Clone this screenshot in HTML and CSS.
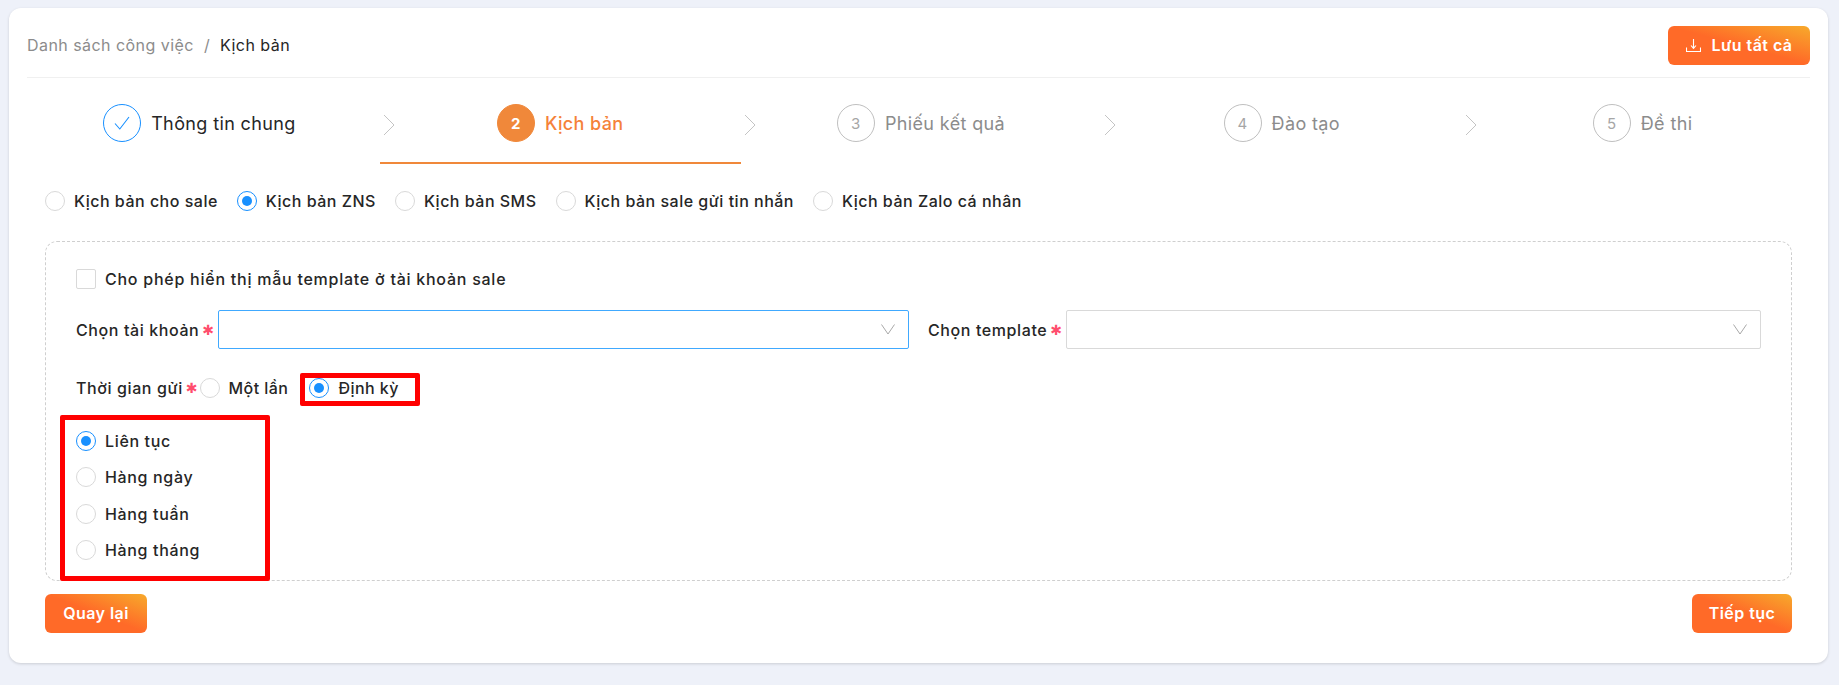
FILE: index.html
```html
<!DOCTYPE html>
<html lang="vi">
<head>
    <meta charset="UTF-8">
    <meta name="viewport" content="width=device-width, initial-scale=1.0">
    <title>Kịch bản</title>
    <link rel="stylesheet" href="styles.css">
</head>
<body>
    <div class="card">
        <div class="topbar">
            <div class="breadcrumb">
                <span class="crumb-link">Danh sách công việc</span>
                <span class="crumb-sep">/</span>
                <span class="crumb-current">Kịch bản</span>
            </div>
            <button type="button" class="btn btn-save">
                <svg class="icon-save" width="15" height="13" viewBox="0 0 15 13" fill="none" stroke="#fff" stroke-width="1.1">
                    <path d="M7.5 0v9M5 6.5l2.5 2.8L10 6.5M.5 8.5v4h14v-4"/>
                </svg>
                Lưu tất cả
            </button>
        </div>

        <div class="steps">
            <div class="step step-done">
                <span class="step-circle">
                    <svg width="16" height="14" viewBox="0 0 16 14" fill="none" stroke="#1890ff" stroke-width="1.1"><path d="M1 7.5l4.8 5.5L15 1"/></svg>
                </span>
                <span class="step-title">Thông tin chung</span>
                <svg class="step-arrow" width="12" height="22" viewBox="0 0 12 22" fill="none" stroke="#c4c4c4"><path d="M1 1l10 10L1 21"/></svg>
            </div>
            <div class="step step-active">
                <span class="step-circle">2</span>
                <span class="step-title">Kịch bản</span>
                <svg class="step-arrow" width="12" height="22" viewBox="0 0 12 22" fill="none" stroke="#c4c4c4"><path d="M1 1l10 10L1 21"/></svg>
            </div>
            <div class="step">
                <span class="step-circle">3</span>
                <span class="step-title">Phiếu kết quả</span>
                <svg class="step-arrow" width="12" height="22" viewBox="0 0 12 22" fill="none" stroke="#c4c4c4"><path d="M1 1l10 10L1 21"/></svg>
            </div>
            <div class="step">
                <span class="step-circle">4</span>
                <span class="step-title">Đào tạo</span>
                <svg class="step-arrow" width="12" height="22" viewBox="0 0 12 22" fill="none" stroke="#c4c4c4"><path d="M1 1l10 10L1 21"/></svg>
            </div>
            <div class="step">
                <span class="step-circle">5</span>
                <span class="step-title">Đề thi</span>
            </div>
        </div>

        <div class="script-types">
            <label class="radio"><span class="radio-dot"></span>Kịch bản cho sale</label>
            <label class="radio"><span class="radio-dot checked"></span>Kịch bản ZNS</label>
            <label class="radio"><span class="radio-dot"></span>Kịch bản SMS</label>
            <label class="radio"><span class="radio-dot"></span>Kịch bản sale gửi tin nhắn</label>
            <label class="radio"><span class="radio-dot"></span>Kịch bản Zalo cá nhân</label>
        </div>

        <div class="panel">
            <label class="check-row"><span class="checkbox"></span>Cho phép hiển thị mẫu template ở tài khoản sale</label>

            <div class="fields">
                <div class="field">
                    <span class="field-label">Chọn tài khoản<span class="req">✱</span></span>
                    <div class="select select-focus">
                        <svg width="14" height="11" viewBox="0 0 14 11" fill="none" stroke="#a8a8a8"><path d="M.5 .5L7 10 13.5 .5"/></svg>
                    </div>
                </div>
                <div class="field">
                    <span class="field-label">Chọn template<span class="req">✱</span></span>
                    <div class="select">
                        <svg width="14" height="11" viewBox="0 0 14 11" fill="none" stroke="#a8a8a8"><path d="M.5 .5L7 10 13.5 .5"/></svg>
                    </div>
                </div>
            </div>

            <div class="send-row">
                <span class="field-label">Thời gian gửi<span class="req">✱</span></span>
                <label class="radio radio-once"><span class="radio-dot"></span>Một lần</label>
                <div class="mark mark-inline">
                    <label class="radio"><span class="radio-dot checked"></span>Định kỳ</label>
                </div>
            </div>

            <div class="mark mark-list">
                <label class="radio"><span class="radio-dot checked"></span>Liên tục</label>
                <label class="radio"><span class="radio-dot"></span>Hàng ngày</label>
                <label class="radio"><span class="radio-dot"></span>Hàng tuần</label>
                <label class="radio"><span class="radio-dot"></span>Hàng tháng</label>
            </div>
        </div>

        <div class="actions">
            <button type="button" class="btn btn-back">Quay lại</button>
            <button type="button" class="btn btn-next">Tiếp tục</button>
        </div>
    </div>
</body>
</html>
```

FILE: styles.css
```css
* {
    box-sizing: border-box;
}

body {
    margin: 0;
    padding: 8px 11px 22px 9px;
    background-color: #eef1f9;
    color: #262626;
    font-family: "Inter", "Noto Sans", sans-serif;
    font-size: 16px;
    font-weight: 500;
    letter-spacing: 0.45px;
}

.card {
    padding: 18px 18px 30px;
    background-color: #fff;
    border-radius: 12px;
    box-shadow: 0 1px 3px rgba(0, 0, 0, 0.15);
}

/* Thanh tren cung */
.topbar {
    display: flex;
    justify-content: space-between;
    align-items: center;
    padding-bottom: 12px;
    border-bottom: 1px solid #f0f0f0;
}

.breadcrumb {
    display: flex;
    gap: 10px;
    padding-bottom: 2px;
    font-weight: 400;
}

.crumb-link,
.crumb-sep {
    color: #8c8c8c;
}

.btn {
    display: inline-flex;
    align-items: center;
    justify-content: center;
    height: 39px;
    padding: 0 0 1px;
    border: none;
    border-radius: 6px;
    background: linear-gradient(to top right, #ff6a28 50%, #f7aa2b 100%);
    color: #fff;
    font-family: inherit;
    font-size: 16px;
    font-weight: 600;
    letter-spacing: inherit;
    cursor: pointer;
}

.btn-save {
    width: 142px;
    gap: 11px;
}

.btn-back {
    width: 102px;
}

.btn-next {
    width: 100px;
}

/* Pasos */
.steps {
    display: grid;
    grid-template-columns: repeat(5, 1fr);
    margin: 0 -13px 0 -8px;
}

.step {
    position: relative;
    display: flex;
    justify-content: center;
    align-items: center;
    gap: 10px;
    padding: 26px 0 20px;
    border-bottom: 2px solid transparent;
    color: #8c8c8c;
    font-size: 18px;
    font-weight: 400;
    letter-spacing: 0.37px;
}

.step-circle {
    display: flex;
    justify-content: center;
    align-items: center;
    width: 38px;
    height: 38px;
    border: 1px solid #bfbfbf;
    border-radius: 50%;
    color: #a6a6a6;
    font-size: 15px;
}

.step-arrow {
    position: absolute;
    top: 36px;
    right: -15px;
}

.step-done {
    color: #262626;
}

.step-done .step-circle {
    border-color: #1890ff;
}

.step-active {
    border-bottom-color: #f0883a;
    color: #f5823a;
    font-weight: 500;
}

.step-active .step-circle {
    border-color: #f0883a;
    background-color: #f0883a;
    color: #fff;
    font-weight: 700;
}

/* Radios */
.radio {
    display: flex;
    align-items: center;
    gap: 9px;
    height: 20px;
}

.radio-dot {
    position: relative;
    flex: none;
    width: 20px;
    height: 20px;
    border: 1px solid #d9d9d9;
    border-radius: 50%;
}

.radio-dot.checked {
    border-color: #1890ff;
}

.radio-dot.checked::after {
    content: "";
    position: absolute;
    top: 4px;
    left: 4px;
    width: 10px;
    height: 10px;
    border-radius: 50%;
    background-color: #1890ff;
}

.script-types {
    display: flex;
    gap: 19px;
    margin: 27px 18px 30px;
    letter-spacing: 0.5px;
}

/* Panel punteado */
.panel {
    height: 340px;
    margin: 0 18px;
    padding: 27px 30px 0;
    border: 1px dashed #cfcfcf;
    border-radius: 12px;
}

.check-row {
    display: flex;
    align-items: center;
    gap: 9px;
    height: 20px;
    letter-spacing: 0.75px;
}

.checkbox {
    width: 20px;
    height: 20px;
    border: 1px solid #d9d9d9;
    border-radius: 2px;
}

.fields {
    display: grid;
    grid-template-columns: 1fr 1fr;
    gap: 19px;
    margin-top: 21px;
}

.field {
    display: flex;
    align-items: center;
    gap: 4px;
}

.field-label {
    display: flex;
    align-items: center;
    letter-spacing: 0.6px;
    white-space: nowrap;
}

.req {
    margin-left: 3px;
    color: #ff4d6d;
    font-family: "DejaVu Sans", sans-serif;
    font-size: 14px;
    letter-spacing: 0;
}

.select {
    display: flex;
    justify-content: flex-end;
    align-items: center;
    flex: 1;
    height: 39px;
    padding-right: 13px;
    border: 1px solid #d9d9d9;
    border-radius: 2px;
}

.select-focus {
    border-color: #40a9ff;
}

.send-row {
    display: flex;
    align-items: center;
    margin-top: 24px;
}

.send-row .field-label,
.radio-once {
    margin-bottom: 3px;
}

.radio-once {
    margin-left: 2px;
}

.mark {
    border: 5px solid #ff0000;
    border-radius: 2px;
}

.mark-inline {
    display: flex;
    align-items: center;
    height: 33px;
    margin-left: 12px;
    padding: 0 16px 3px 4px;
}

.mark-list {
    display: flex;
    flex-direction: column;
    gap: 16.3px;
    width: 210px;
    height: 166px;
    margin: 9px 0 0 -16px;
    padding: 11px 0 0 11px;
    letter-spacing: 0.65px;
}

.actions {
    display: flex;
    justify-content: space-between;
    margin: 13px 18px 0;
}
```
